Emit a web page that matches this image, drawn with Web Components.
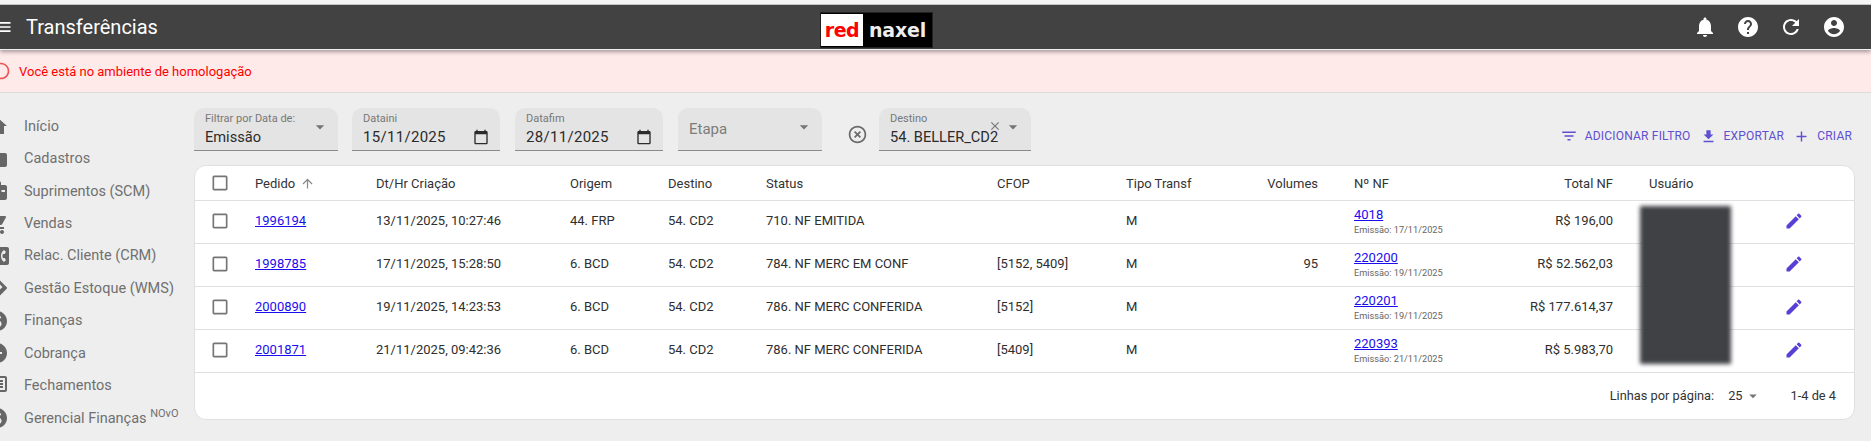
<!DOCTYPE html>
<html lang="pt-BR">
<head>
<meta charset="utf-8">
<title>Transferências</title>
<style>
  html, body { margin: 0; height: 441px; overflow: hidden; background: #eeeeee; }
  body { font-family: Roboto, "Liberation Sans", sans-serif; }
</style>
</head>
<body>
<app-shell></app-shell>
<script>
const ICONS = {
  menu: 'M3 18h18v-2H3v2zm0-5h18v-2H3v2zm0-7v2h18V6H3z',
  home: 'M10 20v-6h4v6h5v-8h3L12 3 2 12h3v8z',
  folder: 'M10 4H4c-1.1 0-1.99.9-1.99 2L2 18c0 1.1.9 2 2 2h16c1.1 0 2-.9 2-2V8c0-1.1-.9-2-2-2h-8l-2-2z',
  work: 'M20 6h-4V4c0-1.11-.89-2-2-2h-4c-1.11 0-2 .89-2 2v2H4c-1.11 0-1.99.89-1.99 2L2 19c0 1.11.89 2 2 2h16c1.11 0 2-.89 2-2V8c0-1.11-.89-2-2-2zm-6 0h-4V4h4v2zM16.5 11h3.5v2h-3.5z',
  cart: 'M7 18c-1.1 0-1.99.9-1.99 2S5.9 22 7 22s2-.9 2-2-.9-2-2-2zM1 2v2h2l3.6 7.59-1.35 2.45c-.16.28-.25.61-.25.96 0 1.1.9 2 2 2h12v-2H7.42c-.14 0-.25-.11-.25-.25l.03-.12.9-1.63h7.45c.75 0 1.41-.41 1.75-1.03l3.58-6.49c.08-.14.12-.31.12-.48 0-.55-.45-1-1-1H5.21l-.94-2H1zm16 16c-1.1 0-1.99.9-1.99 2s.89 2 1.99 2 2-.9 2-2-.9-2-2-2z',
  contact: 'M22 3H2C.9 3 0 3.9 0 5v14c0 1.1.9 2 2 2h20c1.1 0 1.99-.9 1.99-2L24 5c0-1.1-.9-2-2-2zM8 6c1.66 0 3 1.34 3 3s-1.34 3-3 3-3-1.34-3-3 1.34-3 3-3zm6 12H2v-1c0-2 4-3.1 6-3.1s6 1.1 6 3.1v1zm3.85-4h1.64L21 16l-1.99 1.99c-1.31-.98-2.28-2.38-2.73-3.99-.18-.64-.28-1.31-.28-2s.1-1.36.28-2c.45-1.62 1.42-3.01 2.73-3.99L21 8l-1.51 2h-1.64c-.22.63-.35 1.3-.35 2s.13 1.37.35 2z',
  directions: 'M21.71 11.29l-9-9c-.39-.39-1.02-.39-1.41 0l-9 9c-.39.39-.39 1.02 0 1.41l9 9c.39.39 1.02.39 1.41 0l9-9c.39-.38.39-1.01 0-1.41zM14 14.5V12h-4v3H8v-4c0-.55.45-1 1-1h5V7.5l3.5 3.5-3.5 3.5z',
  money: 'M12 2C6.48 2 2 6.48 2 12s4.48 10 10 10 10-4.48 10-10S17.52 2 12 2zm1.41 16.09V20h-2.67v-1.93c-1.71-.36-3.16-1.46-3.27-3.4h1.96c.1 1.05.82 1.87 2.65 1.87 1.96 0 2.4-.98 2.4-1.59 0-.83-.44-1.61-2.67-2.14-2.48-.6-4.18-1.62-4.18-3.67 0-1.72 1.39-2.84 3.11-3.21V4h2.67v1.95c1.86.45 2.79 1.86 2.85 3.39H14.3c-.05-1.11-.64-1.87-2.22-1.87-1.5 0-2.4.68-2.4 1.64 0 .84.65 1.39 2.67 1.91s4.18 1.39 4.18 3.91c-.01 1.83-1.38 2.83-3.12 3.16z',
  minus: 'M12 2C6.48 2 2 6.48 2 12s4.48 10 10 10 10-4.48 10-10S17.52 2 12 2zm5 11H7v-2h10v2z',
  chat: 'M20 2H4c-1.1 0-1.99.9-1.99 2L2 22l4-4h14c1.1 0 2-.9 2-2V4c0-1.1-.9-2-2-2zm0 14H5.17L4 17.17V4h16v12zM6 12h12v2H6zm0-3h12v2H6zm0-3h12v2H6z',
  bell: 'M12 22c1.1 0 2-.9 2-2h-4c0 1.1.89 2 2 2zm6-6v-5c0-3.07-1.64-5.64-4.5-6.32V4c0-.83-.67-1.5-1.5-1.5s-1.5.67-1.5 1.5v.68C7.63 5.36 6 7.92 6 11v5l-2 2v1h16v-1l-2-2z',
  help: 'M12 2C6.48 2 2 6.48 2 12s4.48 10 10 10 10-4.48 10-10S17.52 2 12 2zm1 17h-2v-2h2v2zm2.07-7.75l-.9.92C13.45 12.9 13 13.5 13 15h-2v-.5c0-1.1.45-2.1 1.17-2.83l1.24-1.26c.37-.36.59-.86.59-1.41 0-1.1-.9-2-2-2s-2 .9-2 2H8c0-2.21 1.79-4 4-4s4 1.79 4 4c0 .88-.36 1.68-.93 2.25z',
  refresh: 'M17.65 6.35C16.2 4.9 14.21 4 12 4c-4.42 0-7.99 3.58-7.99 8s3.57 8 7.99 8c3.73 0 6.84-2.55 7.73-6h-2.08c-.82 2.33-3.04 4-5.65 4-3.31 0-6-2.69-6-6s2.69-6 6-6c1.66 0 3.14.69 4.22 1.78L13 11h7V4l-2.35 2.35z',
  account: 'M12 2C6.48 2 2 6.48 2 12s4.48 10 10 10 10-4.48 10-10S17.52 2 12 2zm0 3c1.66 0 3 1.34 3 3s-1.34 3-3 3-3-1.34-3-3 1.34-3 3-3zm0 14.2c-2.5 0-4.71-1.28-6-3.22.03-1.99 4-3.08 6-3.08 1.99 0 5.97 1.09 6 3.08-1.29 1.94-3.5 3.22-6 3.22z',
  event: 'M20 3h-1V1h-2v2H7V1H5v2H4c-1.1 0-2 .9-2 2v16c0 1.1.9 2 2 2h16c1.1 0 2-.9 2-2V5c0-1.1-.9-2-2-2zm0 18H4V8h16v13z',
  down: 'M7 10l5 5 5-5z',
  cancel: 'M14.59 8L12 10.59 9.41 8 8 9.41 10.59 12 8 14.59 9.41 16 12 13.41 14.59 16 16 14.59 13.41 12 16 9.41 14.59 8zM12 2C6.47 2 2 6.47 2 12s4.47 10 10 10 10-4.47 10-10S17.53 2 12 2zm0 18c-4.41 0-8-3.59-8-8s3.59-8 8-8 8 3.59 8 8-3.59 8-8 8z',
  clear: 'M19 6.41L17.59 5 12 10.59 6.41 5 5 6.41 10.59 12 5 17.59 6.41 19 12 13.41 17.59 19 19 17.59 13.41 12z',
  filter: 'M10 18h4v-2h-4v2zM3 6v2h18V6H3zm3 7h12v-2H6v2z',
  download: 'M19 9h-4V3H9v6H5l7 7 7-7zM5 18v2h14v-2H5z',
  add: 'M19 13h-6v6h-2v-6H5v-2h6V5h2v6h6v2z',
  edit: 'M3 17.25V21h3.75L17.81 9.94l-3.75-3.75L3 17.25zM20.71 7.04c.39-.39.39-1.02 0-1.41l-2.34-2.34c-.39-.39-1.02-.39-1.41 0l-1.83 1.83 3.75 3.75 1.83-1.83z',
  up: 'M4 12l1.41 1.41L11 7.83V20h2V7.83l5.58 5.59L20 12l-8-8-8 8z',
  box: 'M19 5v14H5V5h14m0-2H5c-1.1 0-2 .9-2 2v14c0 1.1.9 2 2 2h14c1.1 0 2-.9 2-2V5c0-1.1-.9-2-2-2z',
  info: 'M12 2C6.48 2 2 6.48 2 12s4.48 10 10 10 10-4.48 10-10S17.52 2 12 2zm0 18c-4.41 0-8-3.59-8-8s3.59-8 8-8 8 3.59 8 8-3.59 8-8 8z'
};

class XIcon extends HTMLElement {
  connectedCallback() {
    const size = this.getAttribute('size') || 24;
    this.attachShadow({ mode: 'open' });
    this.shadowRoot.innerHTML = `
      <style>
        :host { display: inline-flex; flex: none; width: ${size}px; height: ${size}px; }
        svg { width: 100%; height: 100%; fill: currentColor; display: block; }
      </style>
      <svg viewBox="0 0 24 24"><path d="${ICONS[this.getAttribute('name')]}"></path></svg>`;
  }
}
customElements.define('x-icon', XIcon);

class AppHeader extends HTMLElement {
  connectedCallback() {
    this.attachShadow({ mode: 'open' });
    this.shadowRoot.innerHTML = `
      <style>
        :host {
          display: block;
          border-top: 4px solid #f5f5f5;
          position: relative;
          z-index: 2;
          box-shadow: 0 2px 4px rgba(0,0,0,0.35);
        }
        header {
          display: flex;
          align-items: center;
          height: 44px;
          background: #424242;
          color: #fff;
          border-top: 1px solid #c4c4c4;
          border-bottom: 1px solid #f0f0f0;
          box-sizing: content-box;
        }
        .menu { margin-left: -7px; width: 20px; height: 20px; }
        h1 { font: 400 20px Roboto, sans-serif; margin: 0 0 0 13px; }
        .logo-wrap { position: absolute; left: 820px; top: 8px; }
        .logo {
          display: flex;
          width: 113px;
          height: 36px;
          box-sizing: border-box;
          border: 1px solid #222;
          background: #000;
          font: 700 19px "DejaVu Sans", sans-serif;
        }
        .red { width: 42px; background: #fff; color: #f00; display: flex; align-items: center; justify-content: center; margin: 1px 0; letter-spacing: -0.4px; }
        .nax { flex: 1; color: #eee; display: flex; align-items: center; justify-content: center; letter-spacing: -0.2px; }
        .tools { margin-left: auto; display: flex; gap: 19px; padding-right: 25px; }
      </style>
      <header>
        <x-icon class="menu" name="menu" size="20"></x-icon>
        <h1>Transferências</h1>
        <div class="logo-wrap"><div class="logo"><span class="red">red</span><span class="nax">naxel</span></div></div>
        <div class="tools">
          <x-icon name="bell"></x-icon>
          <x-icon name="help"></x-icon>
          <x-icon name="refresh"></x-icon>
          <x-icon name="account"></x-icon>
        </div>
      </header>`;
  }
}
customElements.define('app-header', AppHeader);

class AppBanner extends HTMLElement {
  connectedCallback() {
    this.attachShadow({ mode: 'open' });
    this.shadowRoot.innerHTML = `
      <style>
        :host {
          display: flex;
          align-items: center;
          gap: 8px;
          height: 42px;
          background: #ffeaea;
          border-bottom: 1px solid #dcdcdc;
          color: #f00;
          font: 400 13px Roboto, sans-serif;
        }
        x-icon { margin-left: -9px; color: #ee5555; }
        span { padding-top: 1px; }
      </style>
      <x-icon name="info" size="20"></x-icon><span><slot></slot></span>`;
  }
}
customElements.define('app-banner', AppBanner);

class NavItem extends HTMLElement {
  connectedCallback() {
    this.attachShadow({ mode: 'open' });
    this.shadowRoot.innerHTML = `
      <style>
        :host {
          display: flex;
          align-items: center;
          height: 32.45px;
          color: #707070;
          font: 400 14.5px Roboto, sans-serif;
          white-space: nowrap;
        }
        x-icon { margin-right: 15px; color: #666; }
      </style>
      <x-icon name="${this.getAttribute('icon')}"></x-icon><slot></slot>`;
  }
}
customElements.define('nav-item', NavItem);

class SideNav extends HTMLElement {
  connectedCallback() {
    this.attachShadow({ mode: 'open' });
    this.shadowRoot.innerHTML = `
      <style>
        :host {
          display: block;
          flex: none;
          box-sizing: border-box;
          margin-left: -15px;
          width: 209px;
          padding-top: 17px;
        }
        sup { font-size: 11px; line-height: 0; vertical-align: 6px; }
      </style>
      <nav-item icon="home">Início</nav-item>
      <nav-item icon="folder">Cadastros</nav-item>
      <nav-item icon="work">Suprimentos (SCM)</nav-item>
      <nav-item icon="cart">Vendas</nav-item>
      <nav-item icon="contact">Relac. Cliente (CRM)</nav-item>
      <nav-item icon="directions">Gestão Estoque (WMS)</nav-item>
      <nav-item icon="money">Finanças</nav-item>
      <nav-item icon="minus">Cobrança</nav-item>
      <nav-item icon="chat">Fechamentos</nav-item>
      <nav-item icon="money"><span>Gerencial Finanças <sup>NOvO</sup></span></nav-item>
      <nav-item icon="chat"></nav-item>`;
  }
}
customElements.define('side-nav', SideNav);

class FilterField extends HTMLElement {
  connectedCallback() {
    const label = this.getAttribute('label');
    const value = this.getAttribute('value');
    const icon = this.getAttribute('icon');
    const clear = this.hasAttribute('clearable');
    const date = icon === 'event';
    this.attachShadow({ mode: 'open' });
    this.shadowRoot.innerHTML = `
      <style>
        :host {
          display: block;
          flex: none;
          position: relative;
          width: ${this.getAttribute('width')}px;
          height: 43px;
          box-sizing: border-box;
          background: #e4e4e4;
          border-radius: 10px 10px 0 0;
          border-bottom: 1px solid #8a8a8a;
          padding: 4px 11px 0;
          font-family: Roboto, sans-serif;
        }
        .label { font-size: 11px; line-height: 14px; color: #777; white-space: nowrap; }
        .value { font-size: ${date ? '15px' : '14.6px'}; line-height: 20px; margin-top: 1px; color: #2b2b2b; white-space: nowrap; letter-spacing: ${date ? '0.3px' : '0'}; }
        .empty { font-size: 15px; line-height: 20px; color: #7c7c7c; padding-top: 7px; }
        .end { position: absolute; right: ${date ? '11px' : '8px'}; top: ${date ? '21px' : '9px'}; display: flex; align-items: center; color: ${date ? '#2b2b2b' : '#757575'}; }
        .clear { margin-right: 1px; margin-top: -2px; color: #777; }
      </style>
      ${value ? `<div class="label">${label}</div><div class="value">${value}</div>` : `<div class="empty">${label}</div>`}
      <div class="end">
        ${clear ? '<x-icon class="clear" name="clear" size="14"></x-icon>' : ''}
        <x-icon name="${icon}" size="${date ? 16 : 20}"></x-icon>
      </div>`;
  }
}
customElements.define('filter-field', FilterField);

class ActionButton extends HTMLElement {
  connectedCallback() {
    this.attachShadow({ mode: 'open' });
    this.shadowRoot.innerHTML = `
      <style>
        :host {
          display: inline-flex;
          align-items: center;
          gap: 7px;
          color: #5f4fd1;
          font: 400 12px Roboto, sans-serif;
          letter-spacing: 0.2px;
          white-space: nowrap;
        }
      </style>
      <x-icon name="${this.getAttribute('icon')}" size="${this.getAttribute('size') || 18}"></x-icon><slot></slot>`;
  }
}
customElements.define('action-button', ActionButton);

class FilterBar extends HTMLElement {
  connectedCallback() {
    this.attachShadow({ mode: 'open' });
    this.shadowRoot.innerHTML = `
      <style>
        :host { display: flex; align-items: flex-start; height: 43px; }
        .c1 { margin-left: 14px; }
        .c2 { margin-left: 15px; }
        .cancel { margin: 16px 11px 0 25px; color: #6b6b6b; }
        .actions { margin-left: auto; margin-top: 19px; display: flex; gap: 9px; align-items: center; padding-right: 3px; }
      </style>
      <filter-field label="Filtrar por Data de:" value="Emissão" icon="down" width="144"></filter-field>
      <filter-field class="c1" label="Dataini" value="15/11/2025" icon="event" width="148"></filter-field>
      <filter-field class="c2" label="Datafim" value="28/11/2025" icon="event" width="148"></filter-field>
      <filter-field class="c2" label="Etapa" icon="down" width="144"></filter-field>
      <x-icon class="cancel" name="cancel" size="21"></x-icon>
      <filter-field label="Destino" value="54. BELLER_CD2" icon="down" width="152" clearable></filter-field>
      <div class="actions">
        <action-button icon="filter">ADICIONAR FILTRO</action-button>
        <action-button icon="download" size="17">EXPORTAR</action-button>
        <action-button icon="add" size="17">CRIAR</action-button>
      </div>`;
  }
}
customElements.define('filter-bar', FilterBar);

const ROWS = [
  ['1996194', '13/11/2025, 10:27:46', '44. FRP', '54. CD2', '710. NF EMITIDA', '', 'M', '', '4018', '17/11/2025', 'R$ 196,00'],
  ['1998785', '17/11/2025, 15:28:50', '6. BCD', '54. CD2', '784. NF MERC EM CONF', '[5152, 5409]', 'M', '95', '220200', '19/11/2025', 'R$ 52.562,03'],
  ['2000890', '19/11/2025, 14:23:53', '6. BCD', '54. CD2', '786. NF MERC CONFERIDA', '[5152]', 'M', '', '220201', '19/11/2025', 'R$ 177.614,37'],
  ['2001871', '21/11/2025, 09:42:36', '6. BCD', '54. CD2', '786. NF MERC CONFERIDA', '[5409]', 'M', '', '220393', '21/11/2025', 'R$ 5.983,70']
];

class DataTable extends HTMLElement {
  connectedCallback() {
    const body = ROWS.map(r => `
      <tr>
        <td class="chk"><x-icon name="box" size="20"></x-icon></td>
        <td><a href="#">${r[0]}</a></td>
        <td>${r[1]}</td>
        <td>${r[2]}</td>
        <td>${r[3]}</td>
        <td>${r[4]}</td>
        <td>${r[5]}</td>
        <td>${r[6]}</td>
        <td class="num">${r[7]}</td>
        <td class="nf"><a href="#">${r[8]}</a><small>Emissão: ${r[9]}</small></td>
        <td class="num">${r[10]}</td>
        <td class="user"></td>
        <td class="ed"><x-icon name="edit" size="20"></x-icon></td>
      </tr>`).join('');
    this.attachShadow({ mode: 'open' });
    this.shadowRoot.innerHTML = `
      <style>
        :host {
          display: block;
          position: relative;
          margin-top: 14px;
          background: #fff;
          border: 1px solid #e0e0e0;
          border-radius: 12px;
          box-sizing: border-box;
          height: 255px;
          font: 400 13px Roboto, sans-serif;
          color: #2e2e2e;
        }
        table { border-collapse: collapse; table-layout: fixed; width: 100%; }
        th { font-weight: 400; text-align: left; height: 34px; padding: 2px 0 0; box-sizing: border-box; border-bottom: 1px solid #e0e0e0; white-space: nowrap; color: #333; }
        td { height: 40px; padding: 0 0 2px; border-bottom: 1px solid #e0e0e0; white-space: nowrap; }
        .chk { padding-left: 15px; color: #757575; }
        th.chk { padding-top: 0; }
        th.chk x-icon, td.chk x-icon { vertical-align: middle; }
        .num { text-align: right; }
        .nf { padding-left: 36px; }
        .user { padding-left: 36px; }
        .ed { padding-left: 24px; color: #5a3fd6; }
        .ed x-icon { vertical-align: middle; }
        .sort { color: #8a8a8a; vertical-align: -3px; margin-left: 5px; }
        a { color: #1a0dee; text-decoration: underline; }
        small { display: block; font-size: 9.2px; line-height: 11px; color: #666; margin-top: 2px; }
        .nf a { display: inline-block; line-height: 15px; }
        .foot { display: flex; justify-content: flex-end; align-items: center; height: 46px; padding-right: 18px; font-size: 12.8px; color: #333; }
        .foot .size { display: inline-flex; align-items: center; margin-left: 14px; }
        .foot .size x-icon { color: #757575; margin-left: 1px; }
        .foot .range { margin-left: 29px; }
        .blur {
          position: absolute;
          left: 1445px;
          top: 40px;
          width: 91px;
          height: 158px;
          background: #404145;
          filter: blur(2px);
        }
      </style>
      <table>
        <colgroup>
          <col style="width:60px"><col style="width:121px"><col style="width:194px"><col style="width:98px">
          <col style="width:98px"><col style="width:231px"><col style="width:129px"><col style="width:74px"><col style="width:118px">
          <col style="width:182px"><col style="width:113px"><col style="width:147px"><col>
        </colgroup>
        <thead>
          <tr>
            <th class="chk"><x-icon name="box" size="20"></x-icon></th>
            <th>Pedido<x-icon class="sort" name="up" size="15"></x-icon></th>
            <th>Dt/Hr Criação</th>
            <th>Origem</th>
            <th>Destino</th>
            <th>Status</th>
            <th>CFOP</th>
            <th>Tipo Transf</th>
            <th class="num">Volumes</th>
            <th class="nf">Nº NF</th>
            <th class="num">Total NF</th>
            <th class="user">Usuário</th>
            <th></th>
          </tr>
        </thead>
        <tbody>${body}</tbody>
      </table>
      <div class="blur"></div>
      <div class="foot">
        <span>Linhas por página:</span>
        <span class="size">25<x-icon name="down" size="18"></x-icon></span>
        <span class="range">1-4 de 4</span>
      </div>`;
  }
}
customElements.define('data-table', DataTable);

class AppShell extends HTMLElement {
  connectedCallback() {
    this.attachShadow({ mode: 'open' });
    this.shadowRoot.innerHTML = `
      <style>
        :host { display: block; height: 441px; overflow: hidden; }
        .layout { display: flex; }
        main { flex: 1; min-width: 0; padding: 15px 16px 0 0; }
      </style>
      <app-header></app-header>
      <app-banner>Você está no ambiente de homologação</app-banner>
      <div class="layout">
        <side-nav></side-nav>
        <main>
          <filter-bar></filter-bar>
          <data-table></data-table>
        </main>
      </div>`;
  }
}
customElements.define('app-shell', AppShell);
</script>
</body>
</html>
